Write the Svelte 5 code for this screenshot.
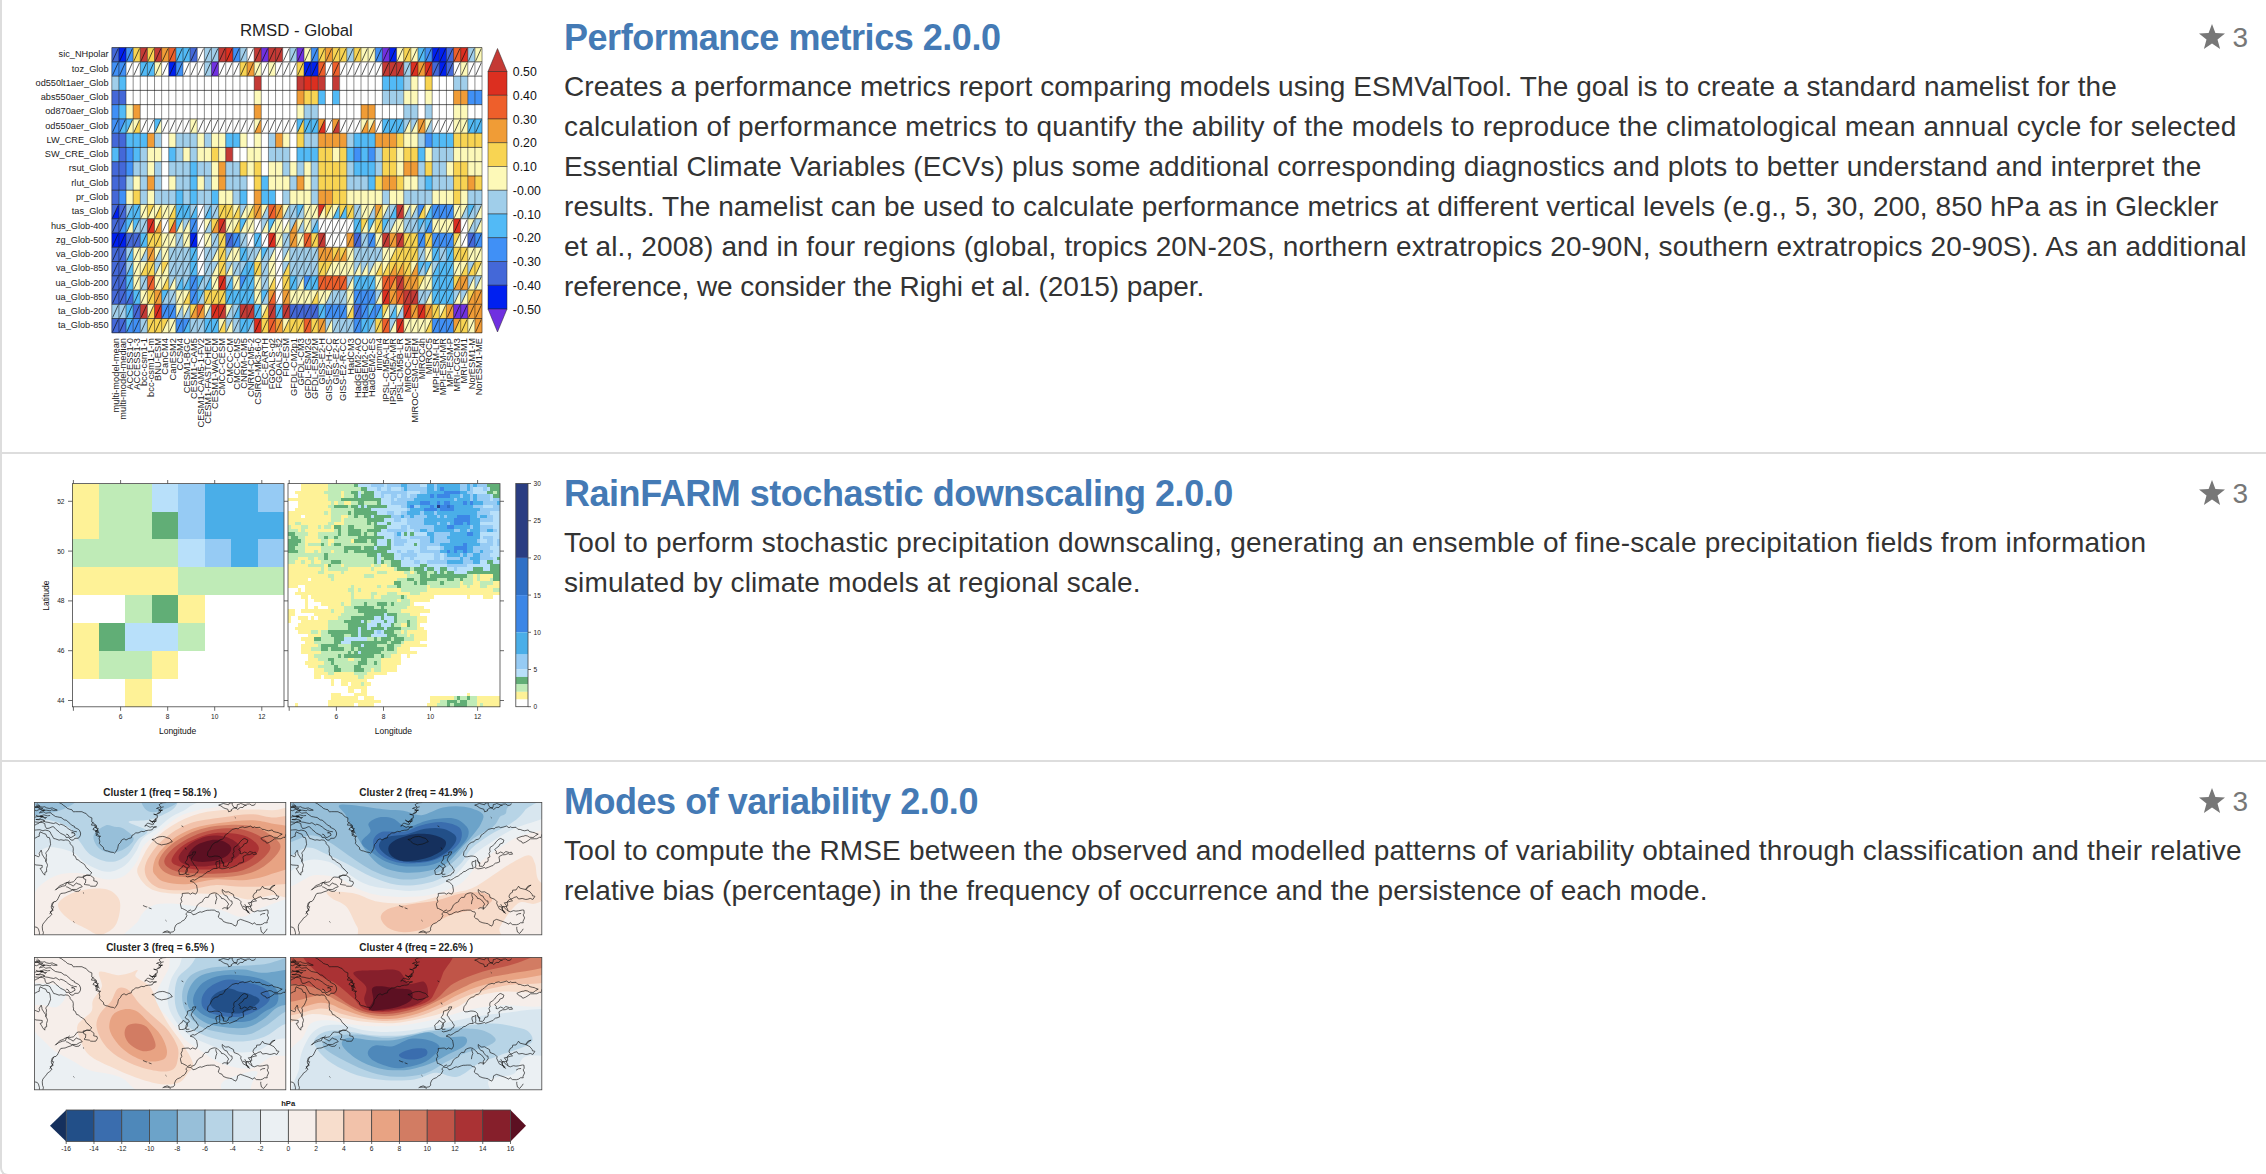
<script>
  // each description line: text and its tracking in px
  const items = [
    {
      kind: 'metrics', title: 'Performance metrics 2.0.0', stars: 3,
      lines: [
        ['Creates a performance metrics report comparing models using ESMValTool. The goal is to create a standard namelist for the', 0.083],
        ['calculation of performance metrics to quantify the ability of the models to reproduce the climatological mean annual cycle for selected', 0.192],
        ['Essential Climate Variables (ECVs) plus some additional corresponding diagnostics and plots to better understand and interpret the', 0.1],
        ['results. The namelist can be used to calculate performance metrics at different vertical levels (e.g., 5, 30, 200, 850 hPa as in Gleckler', 0.053],
        ['et al., 2008) and in four regions (global, tropics 20N-20S, northern extratropics 20-90N, southern extratropics 20-90S). As an additional', 0.126],
        ['reference, we consider the Righi et al. (2015) paper.', -0.08]
      ]
    },
    {
      kind: 'rain', title: 'RainFARM stochastic downscaling 2.0.0', stars: 3,
      lines: [
        ['Tool to perform stochastic precipitation downscaling, generating an ensemble of fine-scale precipitation fields from information', 0.203],
        ['simulated by climate models at regional scale.', 0.12]
      ]
    },
    {
      kind: 'modes', title: 'Modes of variability 2.0.0', stars: 3,
      lines: [
        ['Tool to compute the RMSE between the observed and modelled patterns of variability obtained through classification and their relative', 0.163],
        ['relative bias (percentage) in the frequency of occurrence and the persistence of each mode.', 0.064]
      ]
    }
  ];

  /* ---------- portrait diagram ---------- */
  const heat = {
    V: '#7030e0', B: '#0020f0', R: '#4468d8', D: '#4090f6', S: '#52baf6', L: '#a0ceea', W: '#ffffff',
    Y: '#fdf9b8', G: '#f8d452', O: '#f09c36', T: '#ee5f2b', E: '#dc2f20', C: '#c43a35'
  };
  const w = (n) => 'W'.repeat(n);
  // name, upper-left half, lower-right half (absent when the cell is not split)
  const rows = [
    ['sic_NHpolar', 'RBDGCGCOTSSRWLLCEDLWCVCCWLVYDGOGGLGYYDVBYGYSDBBRTELY', 'RBDGCGCOTSSRWLLCEDLWCVCCWLVYDGOGGLGYYDVBYGYSDBBRTELY'],
    ['toz_Glob', 'DDWWSSYWBDWWWLVWWWGOYWYWWWGBBTWTWWWWWWCCCLEOERBRWYWW', 'DDWWSSYWBDWWWLVWWWGOYWYWWWGBBTWTWWWWWWCCCLEOERBRWYWW'],
    ['od550lt1aer_Glob', 'LS' + w(18) + 'C' + w(5) + 'CEECWC' + w(6) + 'SSSLYWG' + w(3) + 'LLWW'],
    ['abs550aer_Glob', 'RR' + w(18) + 'Y' + w(5) + 'OGGSWS' + w(6) + 'LLLYYWY' + w(3) + 'OODD'],
    ['od870aer_Glob', 'DSYO' + w(16) + 'O' + w(5) + 'YLL' + w(6) + 'OO' + w(4) + 'LLWL' + w(3) + 'YYWW'],
    ['od550aer_Glob', 'DDSYWWSWWWWYWWWWWWWWYWWWWWSSSOWOWWWYYWSSSLLOYWWWYYSS', 'DSYGWWYWWWWYWWWWWWWWOWWWWWGSSEWCWWWOOWSSSYYOLWWWYYSS'],
    ['LW_CRE_Glob', 'RRSSSOLWYLLLYLYYSSYWYWLOYWGLLOOOOLSSSOOOGYYLDSSSGGGG'],
    ['SW_CRE_Glob', 'SRDSLYYWSLYLYYGYCWWYYWLLLWSSSGGYGSDSDLGGYGGSYLLLYYYY'],
    ['rsut_Glob', 'RRDLLYLWLLLSLLYOLLGYGWYYLYLYLGGGGLSSSLGGYOOLGLLYGGYY'],
    ['rlut_Glob', 'RRLYLOLWYLLSYLYOLLLWGSYYYLOYLGGGGLLLSGOOGYYLSLLLGGOG'],
    ['pr_Glob', 'RDYGLYLLLSLSLLSYYLSWOSSWLYYYLOOGGYYYYYLYYLLLLYYYGYLL'],
    ['tas_Glob', 'RRLSYGYYYSSLWLLGGYLYOYTOYLSYYEGYGGLYYOYLCYYDYDDDYYSL', 'BRSSYYGYGSSSWSLGGGYGOLTOLLLYYYYSSGLYLGLSCLLGSDDDYLLY'],
    ['hus_Glob-400', 'RRSSLEYWGSLDWYGEYYSYWLSYWLYYLWWWWWSGSGSLYLLSSYYYEWYL', 'RDYLLEOWTYYDWLOCYGYYWYYYYOLYSWWWWWSYYGLYYLLLDYYYEWLY'],
    ['zg_Glob-500', 'BBRRSGGYYLYBWYLGRDLWSWEYLOYTGCWWWORLDYCOCGGDGDDDGWRD', 'BBRRSGGYYLYBWYLGRDLWSWEYLOYTGCWWWORLDYCOCGGDGDDDYWRD'],
    ['va_Glob-200', 'RRLYYOYYLLLSWLLGLYSLLSLWLLLLLOOGGYLLLLYYGGGLYSLSGGYY', 'RRSYLOLYLLLSWLYGYYSLYLYWYLLLLOOOOYLLLLYGGGGLYSLSGGYY'],
    ['va_Glob-850', 'RRLYYGLGLLLSWLLGLLLSGLYWLLLLLGGYYYLLLYYGGGYSSLSSYYLG', 'RRSYGGYYLLLSWLYGYLSSGLYWGLLLLGYYYYYYYGGOOGOLYSSSYGGY'],
    ['ua_Glob-200', 'RRSYLTYYLLLDSLYELYDSYLYWGSLDSTTTTLSSSYTTCOOGYSSSGOLL', 'RRSYLTYGYSSDLSYESYSSYLGWGSYSSTTTTYSSSYTOCOOYYSSSOOYY'],
    ['ua_Glob-850', 'RRDSYGOSLYYDSGGGSSSSYSOWOYYYYYYLLYDDDLEOTCCLLSSSLLGO', 'RRRSYGOLLYGDLGGGSSSSYLTWOYYYGYLLLYDDDYEOTCCLYSSSYYOO'],
    ['ta_Glob-200', 'LLSRCYEDDYYGTYEEYLCCSYCSCRRRRSDDDYRDSDGLYEOEOGYOVVOO', 'LLSRCGEDDLLOOLECLSCCSGCSCRRRRSDDDGRDDSYSLEOEOGGOVVOO'],
    ['ta_Glob-850', 'RRSDLGGGYDDLLSSYLLSSEGTOYGGTGOLLLLDSSGTLEYYYYDDDOGYO', 'RRDDLGGYYDSLLSSGYLSLEGTOGGGTGOYLLLDSLGTYEYYYGDDDGGYO']
  ];
  const models = ('multi-model-mean multi-model-median ACCESS1-0 ACCESS1-3 bcc-csm1-1 bcc-csm1-1-m BNU-ESM CanCM4 CanESM2 CCSM4 ' +
    'CESM1-BGC CESM1-CAM5 CESM1-CAM5-1-FV2 CESM1-FASTCHEM CESM1-WACCM CMCC-CESM CMCC-CM CMCC-CMS CNRM-CM5 CNRM-CM5-2 ' +
    'CSIRO-Mk3-6-0 EC-EARTH FGOALS-g2 FGOALS-s2 FIO-ESM GFDL-CM2p1 GFDL-CM3 GFDL-ESM2G GFDL-ESM2M GISS-E2-H GISS-E2-H-CC ' +
    'GISS-E2-R GISS-E2-R-CC HadCM3 HadGEM2-AO HadGEM2-CC HadGEM2-ES inmcm4 IPSL-CM5A-LR IPSL-CM5A-MR IPSL-CM5B-LR MIROC-ESM ' +
    'MIROC-ESM-CHEM MIROC4h MIROC5 MPI-ESM-LR MPI-ESM-MR MPI-ESM-P MRI-CGCM3 MRI-ESM1 NorESM1-M NorESM1-ME').split(' ');
  const HX = 111.8, HY = 47.6, CW = 7.12, CH = 14.26;
  const barCodes = ['E', 'T', 'O', 'G', 'Y', 'L', 'S', 'D', 'R', 'B'];
  const barLabels = ['0.50', '0.40', '0.30', '0.20', '0.10', '-0.00', '-0.10', '-0.20', '-0.30', '-0.40', '-0.50'];

  /* ---------- precipitation maps ---------- */
  const rainCol = ['#ffffff', '#fef297', '#bfebb7', '#61ae76', '#b8e0fa', '#96cbf4', '#4aaee8', '#3c86e6', '#3070c6', '#2a3d82'];
  const coarse = ['12245665', '12235666', '22224565', '11112222', '00231000', '13442000', '12210000', '00100000'];
  const field = [
    [.5, 1, 1, 1.7, 2.3, 3, 4, 4.5, 5, 5, 5.5, 6.3, 6, 6, 4, 2.6],
    [.2, 1, 1, 1.8, 2, 3, 3, 3.8, 5, 5.5, 5.8, 6.6, 6.3, 6.3, 5.5, 4.8],
    [.9, .8, 1.1, 2, 2, 2.5, 3, 4, 5, 5.5, 6.2, 6.1, 6, 6.4, 5.4, 4.4],
    [2.6, 1.2, 1.7, 2.4, 2.1, 1.8, 2.5, 4, 4.6, 4.1, 5, 5.6, 6.1, 6.6, 5.1, 4.4],
    [2.6, 1.2, 1.7, 2.4, 2.3, 2.2, 3.5, 3.5, 4.2, 3.8, 4.8, 5.7, 6.2, 6.5, 5.6, 4.6],
    [2, 1.5, 1.9, 2.6, 2.6, 2.2, 2.5, 2.5, 4.4, 4.4, 4.6, 5, 5.9, 5.5, 4.8, 3.5],
    [1, 1, 1.2, 1.3, 1.3, 1.2, 1.2, 1.2, 1.6, 1.9, 2.6, 2.9, 3, 2.6, 2.2, 2.3],
    [.6, .8, 1, 1, 1.1, 1.1, 1.2, 1.2, 2.2, 2, 1.3, 1.3, 1.2, 1.2, 1.8, 1.9],
    [0, .5, .6, .9, 1.3, 2.3, 2.1, 2.6, 1.5, .9, .4, -.2, -.2, -.2, -.2, -.2],
    [.3, .5, .7, 1.2, 1.8, 3.4, 3.8, 3.3, 2.4, 1.2, .2, -1, -1, -1, -1, -1],
    [.3, .9, 1.7, 2.8, 2.8, 3.5, 3.5, 3.6, 2.3, 1.6, .5, -1, -1, -1, -1, -1],
    [.1, .9, 2.5, 2.9, 2.9, 4, 3.1, 2.6, 1.5, 1.1, .4, -1, -1, -1, -1, -1],
    [-.6, .6, 2.1, 2.4, 2.2, 2.3, 1.9, 1.3, .9, .1, -1, -1, -1, -1, -1, -1],
    [-1, .1, 1.2, 1.8, 1.9, 2.5, 1.3, .9, -.2, -1, -1, -1, -1, -1, -1, -1],
    [-1, -1, -.8, .2, .1, 1, 0, -.8, -1, -1, -1, -2.5, -4, -4, -2.5, -2],
    [.5, -.6, -.1, .9, .9, .8, .5, 0, -1, -1, .1, 1.6, 2.4, 2.8, 1.6, 1]
  ];
  const rnd = (x, y) => { const v = Math.sin(x * 127.1 + y * 311.7 + 4.3) * 43758.5453; return v - Math.floor(v); };
  const at = (x, y) => field[Math.max(0, Math.min(15, y))][Math.max(0, Math.min(15, x))];
  const fine = [];
  for (let y = 0; y < 64; y++) {
    let start = 0, prev = -1;
    for (let x = 0; x <= 64; x++) {
      let c = -1;
      if (x < 64) {
        const fx = (x + .5) / 4 - .5, fy = (y + .5) / 4 - .5;
        const ix = Math.floor(fx), iy = Math.floor(fy), tx = fx - ix, ty = fy - iy;
        let v = (at(ix, iy) * (1 - tx) + at(ix + 1, iy) * tx) * (1 - ty) + (at(ix, iy + 1) * (1 - tx) + at(ix + 1, iy + 1) * tx) * ty;
        const n = (rnd(x, y) - .5) * .45 + (rnd(x >> 1, (y >> 1) + 90) - .5) * .9 + (rnd((x + (y & 3)) >> 2, y + 40) - .5) * .95;
        v += n * (v > 1.6 ? 1.25 : .62);
        c = Math.max(0, Math.min(8, Math.round(v)));
        if (x === 45 && y === 6) c = 9;
      }
      if (c !== prev) {
        if (prev > 0) fine.push({ x: start, y, n: x - start, c: prev });
        start = x; prev = c;
      }
    }
  }
  const rainBar = [[30, 20, 9], [20, 15, 8], [15, 10, 7], [10, 7, 6], [7, 5, 5], [5, 4, 4], [4, 3, 3], [3, 2, 2], [2, 1, 1]];
  const ry = (v) => 706.7 - v * 7.44;

  /* ---------- circulation regimes ---------- */
  const pal = ['#15305d', '#224f88', '#3a6dae', '#4e88ba', '#6ca3c9', '#97bfd9', '#b7d4e6', '#d8e6ef', '#ebf0f3',
    '#f6eeea', '#f7ddcc', '#f2c2aa', '#e8a383', '#d27c63', '#c05548', '#aa3234', '#861f2b', '#5c1022'];
  const pts = (s) => s.trim().split(/\s+/).map((p) => p.split(',').map(Number));
  function blob(s) {
    const p = pts(s), n = p.length;
    let d = `M${p[0]}`;
    for (let i = 0; i < n; i++) {
      const a = p[(i + n - 1) % n], b = p[i], c = p[(i + 1) % n], e = p[(i + 2) % n];
      d += `C${b[0] + (c[0] - a[0]) / 6},${b[1] + (c[1] - a[1]) / 6} ${c[0] - (e[0] - b[0]) / 6},${c[1] - (e[1] - b[1]) / 6} ${c}`;
    }
    return d + 'Z';
  }
  function rough(s) {
    const p = pts(s);
    let d = `M${p[0]}`;
    for (let i = 1; i < p.length; i++) {
      const [x0, y0] = p[i - 1], [x1, y1] = p[i], len = Math.hypot(x1 - x0, y1 - y0), k = Math.max(1, Math.round(len / 7));
      for (let j = 1; j < k; j++) {
        const t = j / k;
        d += `L${x0 + (x1 - x0) * t + (rnd(x0 + j, y1) - .5) * 7},${y0 + (y1 - y0) * t + (rnd(y0 + j, x1) - .5) * 7}`;
      }
      d += `L${x1},${y1}`;
    }
    return d;
  }
  const coast = [
    '165,127 205,155 235,158 250,170 262,190 275,205 268,220 280,230 278,250 290,268 320,279 330,260 340,240 360,235 380,218 420,210 438,200 405,198 412,190 430,192 418,180 434,184 440,165 430,162 448,158 455,150 438,145 450,140 445,134 465,127',
    '262,185 256,195 270,200 260,208 275,212 268,225 282,228', '264,196 274,208 266,214 278,220', '430,190 438,182 426,186 440,176', '440,162 452,150 444,152 458,140',
    '425,238 445,230 475,235 482,245 465,252 440,250 430,240 425,238',
    '96,140 125,150 110,158 135,158 160,170 185,180 200,195 222,210 225,225 205,240 185,232 165,215 150,200 130,205 125,190 96,185',
    '96,150 118,146 140,152 160,150 130,143 100,133', '100,165 120,170 100,178 125,182 108,190 96,196', '185,222 195,232 210,225 200,218 215,215',
    '104,130 112,138 98,142 120,145', '96,172 130,172 112,168 140,166', '120,182 150,190 170,192 190,205 205,212',
    '96,210 120,212 140,215 150,235 165,240 190,240 205,265 205,285 225,305 240,320 257,338 250,345 215,352 205,365 180,370 155,390 175,378 195,362',
    '232,348 245,345 258,350 262,362 271,364 268,378 250,375 235,372 240,358 232,348',
    '190,370 205,378 215,368 230,380 210,388 200,388 185,380',
    '225,388 190,395 170,400 160,420 145,430 150,440 140,455 145,462 138,470 125,485 118,500 120,524', '96,500 104,502 110,524',
    '150,425 143,440 149,450 139,462', '96,285 108,290 115,270 122,290 132,312 130,325 125,345 118,335 112,325 118,316 96,312', '96,235 110,228 112,215 128,222 140,240 138,262 128,280 128,305',
    '612,135 625,130 640,134 650,128 655,142 670,132 690,135 680,142 665,148 655,143 640,155 630,145 612,135', '690,132 705,136 715,130',
    '800,222 798,232 775,236 745,248 730,235 750,228 775,232 790,222 765,214 740,208 712,200 680,200 650,208 630,225 610,245 590,262 582,275 585,290 608,288 620,295 625,318 638,315 650,300 655,290 652,280 655,262 672,245 685,235 694,240 680,258 668,268 672,280 715,276 718,282 690,284 680,290 682,305 660,317 630,325 612,322 615,300 605,305 608,325 580,335 560,350 545,360 532,363 550,375 552,395 548,402 510,400 505,430 508,445 525,454 545,450 552,435 575,412 600,398 612,405 640,432 636,448 650,430 625,400 622,388 640,395 655,412 675,425 680,445 695,458 690,440 702,438 695,428 718,422 708,408 735,378 755,388 770,375 755,388 780,408 775,418 745,415 722,412 705,422 700,440 712,455 735,452 750,450 748,488 735,492 700,488 680,480 665,482 660,498 635,488 615,475 612,455 600,450 560,455 540,464 525,456 515,480 492,495 485,515 458,516',
    '520,348 545,345 555,330 542,312 535,300 548,275 525,288 518,306 530,320 520,338 530,342', '500,330 512,316 524,325 520,340 502,343 500,330',
    '604,402 607,415 603,432', '622,446 638,444', '685,432 705,452', '680,438 700,460', '728,465 742,460', '730,500 738,520 748,506', '618,300 625,312',
    '400,436 412,440', '416,443 424,446', '518,262 521,268', '508,197 513,200', '463,480 466,483', '455,518 470,516 478,520', '657,171 660,174', '232,397 235,400', '205,484 208,487'
  ].map(rough);
  const clusters = [
    { name: 'Cluster 1 (freq = 58.1% )', x: 96, y: 127, px: 34.4, py: 802.5, bg: 9, shapes: [
      [8, '60,430 110,378 160,345 230,340 300,358 350,345 385,300 400,260 440,220 500,170 560,148 620,135 660,90 60,60'],
      [7, '60,300 130,262 200,275 240,310 300,335 350,315 380,275 400,235 440,205 480,170 530,140 560,90 60,60'],
      [6, '60,170 140,180 190,200 220,240 255,285 310,305 355,285 385,240 412,212 360,185 420,178 480,150 500,120 510,80 60,60'],
      [5, '60,60 70,165 110,162 165,152 215,120 220,60'], [5, '295,196 262,225 275,262 310,278 350,265 374,235 345,205 320,200'], [5, '400,100 405,145 440,155 500,125 500,100'],
      [8, '370,560 388,480 420,440 470,430 560,440 620,450 680,470 740,440 840,420 850,560'],
      [10, '162,435 190,405 240,388 300,388 332,415 335,455 320,500 280,524 240,505 190,475'],
      [10, '385,340 395,300 430,240 500,185 580,155 680,148 760,150 850,160 850,395 760,405 700,418 640,405 560,400 480,400 420,385'],
      [11, '405,325 420,285 460,235 530,190 620,172 700,162 760,172 850,180 850,345 760,375 680,380 600,375 520,390 450,385 415,360'],
      [12, '428,325 440,285 480,240 540,205 620,188 700,180 760,190 850,215 850,300 750,345 680,360 600,358 520,372 460,365 435,345'],
      [13, '445,300 470,262 520,225 580,202 660,194 720,203 770,235 785,262 760,300 710,335 640,350 540,352 480,345 450,325'],
      [14, '460,300 490,260 540,228 600,208 670,206 730,230 757,262 730,300 680,330 610,340 520,338 475,325'],
      [15, '480,300 505,262 550,235 610,218 680,225 718,250 722,275 690,305 640,322 560,328 500,318'],
      [16, '500,290 530,252 580,228 630,230 667,252 672,280 640,305 580,318 520,314'],
      [17, '528,280 550,255 590,240 625,243 647,262 637,285 600,302 555,305 532,296']] },
    { name: 'Cluster 2 (freq = 41.9% )', x: 813, y: 127, px: 290.4, py: 802.5, bg: 9, shapes: [
      [8, '780,365 880,345 950,355 1000,385 1060,405 1150,410 1220,400 1290,370 1340,310 1390,270 1440,235 1480,220 1560,185 1560,60 780,60'],
      [7, '780,330 860,300 920,305 960,330 1020,370 1080,385 1160,392 1230,375 1280,340 1320,290 1370,250 1440,205 1550,155 1550,60 780,60'],
      [6, '780,285 860,262 910,280 970,310 1040,350 1110,374 1180,372 1240,352 1290,310 1320,265 1370,225 1430,190 1470,150 1520,60 780,60'],
      [5, '780,240 870,225 920,245 975,285 1050,335 1120,357 1190,352 1240,328 1285,290 1320,240 1380,200 1400,170 1418,150 1400,60 780,60'],
      [4, '950,135 968,165 1000,230 1030,280 1070,320 1130,337 1200,332 1250,310 1290,265 1320,230 1347,190 1350,160 1300,140 1240,142 1180,165 1130,152 1080,148 1010,138'],
      [3, '1037,215 1032,190 1060,172 1100,175 1140,200 1200,180 1270,175 1307,200 1310,230 1285,265 1250,295 1200,316 1130,318 1080,304 1045,280 1012,248'],
      [2, '1045,240 1070,215 1130,215 1180,195 1240,186 1287,203 1290,240 1260,275 1210,302 1140,310 1085,297 1053,270'],
      [1, '1062,250 1085,230 1140,222 1190,206 1240,206 1277,230 1262,265 1215,297 1150,306 1100,296 1068,272'],
      [0, '1088,260 1110,238 1160,222 1210,224 1247,242 1238,270 1190,295 1130,303 1095,286'],
      [10, '915,395 950,395 1000,402 1060,425 1150,428 1250,402 1320,385 1380,345 1430,310 1480,285 1498,310 1508,360 1550,395 1500,430 1450,430 1400,500 1380,560 1040,560 1000,500 970,440 930,415'],
      [11, '1066,470 1090,445 1150,432 1220,422 1290,400 1350,398 1378,420 1340,445 1260,465 1190,505 1130,516 1085,502']] },
    { name: 'Cluster 3 (freq = 6.5% )', x: 96, y: 52, px: 34.4, py: 957.5, bg: 9, shapes: [
      [8, '520,0 470,90 440,150 425,185 460,220 490,260 520,300 560,330 620,370 700,385 760,350 850,310 850,0'],
      [7, '560,0 500,80 475,130 470,190 490,240 530,285 590,315 650,335 720,332 770,300 850,260 850,0'],
      [6, '610,0 530,80 495,120 490,190 510,240 550,275 610,298 680,304 740,290 790,255 850,220 850,0'],
      [5, '640,78 580,85 530,110 510,160 520,215 560,258 620,277 690,284 740,260 790,220 850,180 850,50 740,72'],
      [4, '600,95 550,115 525,160 530,205 570,245 620,260 690,262 740,235 780,200 850,175 850,90 740,98 680,88'],
      [3, '620,106 570,126 543,165 545,200 580,230 640,244 700,242 740,215 775,190 775,150 740,120 680,106'],
      [2, '640,118 590,138 566,170 570,205 610,225 670,230 720,210 754,180 747,150 705,130'],
      [1, '640,145 600,163 588,190 610,212 670,220 705,203 727,180 700,162 670,155'],
      [8, '60,250 110,290 150,330 200,360 250,390 320,405 360,430 380,490 60,490'],
      [8, '60,135 120,130 170,140 185,165 160,200 120,195 60,190'], [8, '640,480 620,430 680,400 720,395 705,430 690,480'],
      [10, '278,95 330,105 365,98 385,90 380,110 420,140 440,190 470,250 510,310 540,370 525,400 500,428 450,432 380,412 310,380 250,345 225,300 217,255 255,215 260,180 285,140'],
      [11, '330,145 360,150 390,190 430,230 470,270 497,320 497,360 485,387 450,394 390,380 330,350 290,310 270,260 280,220 310,185'],
      [12, '345,208 380,212 415,245 450,285 467,330 457,358 410,363 360,340 325,305 306,265 315,225'],
      [13, '380,250 410,260 432,300 432,325 400,333 365,314 349,285 355,258']] },
    { name: 'Cluster 4 (freq = 22.6% )', x: 813, y: 52, px: 290.4, py: 957.5, bg: 8, shapes: [
      [7, '860,490 838,380 860,300 900,260 960,255 1020,270 1100,275 1200,262 1280,240 1400,220 1560,215 1560,335 1470,350 1440,400 1370,420 1330,490'],
      [6, '880,300 910,275 960,272 1040,285 1130,285 1200,270 1290,258 1380,250 1440,260 1480,275 1485,310 1400,345 1340,370 1280,410 1220,398 1160,418 1080,420 1000,405 930,370 890,330'],
      [5, '905,320 930,290 1000,283 1080,293 1160,282 1220,272 1280,265 1350,270 1387,295 1370,315 1300,340 1250,365 1190,400 1110,410 1040,397 970,365'],
      [4, '958,315 975,293 1040,300 1100,300 1150,288 1200,276 1240,292 1300,290 1302,315 1250,345 1200,372 1130,390 1060,384 1000,357'],
      [3, '1030,335 1050,316 1100,318 1150,296 1200,300 1230,318 1215,345 1180,370 1120,384 1080,377 1040,357'],
      [2, '1118,342 1150,327 1190,326 1194,345 1160,358 1128,354'],
      [9, '770,320 840,300 870,250 920,240 980,252 1050,258 1130,255 1200,242 1270,222 1330,205 1400,195 1560,180 1560,-20 770,-20'],
      [10, '770,240 870,222 950,232 1020,245 1100,249 1180,235 1250,215 1290,195 1330,170 1400,155 1560,140 1560,-20 770,-20'],
      [11, '770,212 900,205 960,222 1030,238 1100,242 1170,229 1230,205 1280,180 1340,155 1420,135 1560,112 1560,-20 770,-20'],
      [12, '770,200 900,188 960,208 1030,231 1100,236 1170,220 1230,194 1290,160 1370,130 1560,88 1560,-20 770,-20'],
      [13, '770,175 900,165 950,185 1010,217 1080,228 1160,213 1220,185 1290,145 1370,112 1560,68 1560,-20 770,-20'],
      [14, '770,110 870,140 930,160 980,195 1030,217 1100,220 1170,202 1220,178 1270,130 1350,95 1450,68 1540,20 1500,-20 770,-20'],
      [15, '850,20 890,100 940,130 990,175 1020,207 1080,215 1150,202 1200,182 1220,150 1240,100 1260,20 1050,-20'],
      [16, '990,97 1060,90 1115,92 1145,130 1187,125 1197,165 1160,195 1090,210 1040,210 1020,180 1025,140'],
      [17, '1042,145 1065,138 1110,145 1150,150 1152,178 1120,198 1070,209 1033,209 1045,180']] }
  ];
  const modeTicks = Array.from({ length: 17 }, (_, i) => ({ v: -16 + 2 * i, x: 66.2 + i * 27.77 }));
</script>

<main>
  {#each items as item}
    <article class="row {item.kind}">
      <div class="thumb">
        {#if item.kind === 'metrics'}
          <svg class="figure" viewBox="2 0 560 452" width="560" height="452">
            <text class="ink" x="296.4" y="35.6" font-size="16.8" text-anchor="middle">RMSD - Global</text>
            {#each rows as [name, upper, lower], r}
              <text class="ink" x="108.6" y={HY + r * CH + 9.8} font-size="9.2" text-anchor="end">{name}</text>
              {#each upper as code, c}
                <rect x={HX + c * CW} y={HY + r * CH} width={CW} height={CH} fill={heat[code]} />
                {#if lower}
                  <path d="M{HX + c * CW + CW} {HY + r * CH}v{CH}h{-CW}z" fill={heat[lower[c]]} />
                  <path class="slash" d="M{HX + c * CW + CW - .8} {HY + r * CH + 1}l{-CW + 1.6} {CH - 2}" />
                {/if}
              {/each}
            {/each}
            {#each Array(53) as _, c}
              <path class="rule v" d="M{HX + c * CW} {HY}v{CH * 20}" />
            {/each}
            {#each Array(21) as _, r}
              <path class="rule" d="M{HX} {HY + r * CH}h{CW * 52}" />
            {/each}
            {#each models as model, c}
              <text class="ink" font-size="9.3" text-anchor="end" transform="translate({HX + c * CW + 6.8} 338) rotate(-90)">{model}</text>
            {/each}
            <path class="outline" d="M488 71.5L497.5 48.5L507 71.5z" fill={heat.C} />
            {#each barCodes as code, i}
              <rect class="outline" x="488" y={71.5 + i * 23.75} width="19" height="23.75" fill={heat[code]} />
            {/each}
            <path class="outline" d="M488 309L497.5 332L507 309z" fill={heat.V} />
            {#each barLabels as label, i}
              <text class="ink dark" x="512.8" y={76 + i * 23.75} font-size="12.3">{label}</text>
            {/each}
          </svg>
        {:else if item.kind === 'rain'}
          <svg class="figure" viewBox="2 454 560 306" width="560" height="306">
            {#each coarse as line, r}
              {#each line as code, c}
                <rect x={72.4 + c * 26.45} y={483.6 + r * 27.9} width="26.6" height="28" fill={rainCol[+code]} shape-rendering="crispEdges" />
              {/each}
            {/each}
            {#each fine as f}
              <rect x={288 + f.x * 3.31} y={483.6 + f.y * 3.487} width={f.n * 3.31} height="3.487" fill={rainCol[f.c]} shape-rendering="crispEdges" />
            {/each}
            <rect class="frame" x="72.4" y="483.6" width="211.6" height="223.2" />
            <rect class="frame" x="288" y="483.6" width="212" height="223.2" />
            {#each [0, 1] as p}
              {#each [73.4, 120.6, 167.7, 214.7, 261.8] as x, i}
                <path class="frame" d="M{x + p * 215.8} 480v3.6M{x + p * 215.8} 706.8v4" />
                {#if i}
                  <text class="ink" x={x + p * 215.8} y="719.4" font-size="6.6" text-anchor="middle">{4 + 2 * i}</text>
                {/if}
              {/each}
              <text class="ink dark" x={177.6 + p * 215.8} y="733.6" font-size="8.5" text-anchor="middle">Longitude</text>
            {/each}
            {#each [52, 50, 48, 46, 44] as lat, i}
              <path class="frame" d="M68 {501.3 + i * 49.8}h4.4M284 {501.3 + i * 49.8}h4M500 {501.3 + i * 49.8}h4" />
              <text class="ink" x="64.5" y={503.7 + i * 49.8} font-size="6.6" text-anchor="end">{lat}</text>
            {/each}
            <text class="ink dark" font-size="8.5" text-anchor="middle" transform="translate(49 595.7) rotate(-90)">Latitude</text>
            {#each rainBar as [hi, lo, c]}
              <rect x="515.8" y={ry(hi)} width="12.2" height={(hi - lo) * 7.44} fill={rainCol[c]} />
            {/each}
            <rect class="frame" x="515.8" y="483.5" width="12.2" height="223.2" />
            {#each [0, 5, 10, 15, 20, 25, 30] as v}
              <path class="frame" d="M528 {ry(v)}h3" />
              <text class="ink" x="533.6" y={ry(v) + 2.5} font-size="6.6">{v}</text>
            {/each}
          </svg>
        {:else}
          <svg class="figure" viewBox="2 762 560 412" width="560" height="412">
            {#each clusters as c}
              <text class="ink bold" x={c.px + 125.8} y={c.py - 6.4} font-size="10" text-anchor="middle">{c.name}</text>
              <svg x={c.px} y={c.py} width="251.4" height="132.3" viewBox="{c.x} {c.y} 704 397" preserveAspectRatio="none">
                <rect x={c.x} y={c.y} width="704" height="397" fill={pal[c.bg]} />
                {#each c.shapes as [color, shape]}
                  <path d={blob(shape)} fill={pal[color]} />
                {/each}
                <g transform="translate({c.x - 96} {c.y - 127})">
                  {#each coast as d}
                    <path class="coast" {d} />
                  {/each}
                </g>
              </svg>
              <rect class="frame" x={c.px} y={c.py} width="251.4" height="132.3" />
            {/each}
            <text class="ink bold" x="288.2" y="1106.4" font-size="7.6" text-anchor="middle">hPa</text>
            <path d="M66.2 1110L50 1125.7L66.2 1141.4z" fill={pal[0]} />
            <path d="M510.5 1110L526 1125.7L510.5 1141.4z" fill={pal[17]} />
            {#each modeTicks as t, i}
              {#if i < 16}
                <rect class="frame" x={t.x} y="1110" width="27.77" height="31.4" style:fill={pal[i + 1]} />
              {/if}
              <path class="frame" d="M{t.x} 1141v3" />
              <text class="ink" x={t.x} y="1150.6" font-size="6.7" text-anchor="middle">{t.v}</text>
            {/each}
          </svg>
        {/if}
      </div>
      <div class="body">
        <header>
          <h2>{item.title}</h2>
          <span class="stars">
            <svg viewBox="0 0 26 25" width="26" height="25"><path d="M13 0L16.4 9.1L26 9.5L18.5 15.4L21.1 25L13 19.6L4.9 25L7.5 15.4L0 9.5L9.6 9.1z" fill="#777" /></svg>
            {item.stars}
          </span>
        </header>
        <p>
          {#each item.lines as [line, tracking]}
            <span style:letter-spacing="{tracking}px">{line}</span>
          {/each}
        </p>
      </div>
    </article>
  {/each}
</main>

<style>
  :global(body) { margin: 0; background: #fff; overflow: hidden; }
  main {
    box-sizing: border-box;
    height: 1176px;
    border: solid #ddd;
    border-width: 0 0 2px 2px;
    border-bottom-left-radius: 8px;
    font-family: "Liberation Sans", Arial, sans-serif;
    color: #333;
  }
  .row { box-sizing: border-box; display: flex; border-bottom: 2px solid #ddd; height: 308px; }
  .row.metrics { height: 454px; }
  .row.modes { height: 412px; border-bottom: 0; }
  .thumb { flex: 0 0 562px; }
  .figure { display: block; }
  .body { flex: 1; min-width: 0; padding: 20px 18px 0 0; }
  .metrics .body { padding-top: 18px; }
  header { display: flex; justify-content: space-between; height: 49px; }
  h2 { margin: 0; font-size: 36px; line-height: 40px; font-weight: 700; letter-spacing: -0.47px; color: #447ab5; white-space: nowrap; }
  .stars { display: flex; align-items: center; gap: 7px; height: 40px; font-size: 28px; line-height: 40px; color: #777; }
  .stars svg { margin-bottom: 3px; }
  p { margin: 0; font-size: 28px; line-height: 40px; }
  p span { display: block; white-space: nowrap; }
  .ink { fill: #222; }
  .dark { fill: #111; }
  .bold { font-weight: 700; }
  .rule { stroke: #111; stroke-width: .9; fill: none; opacity: .75; }
  .rule.v { stroke-width: .8; opacity: .6; }
  .slash { stroke: #111; stroke-width: .7; fill: none; }
  .outline { stroke: #222; stroke-opacity: .6; stroke-width: .8; }
  .frame { fill: none; stroke: #444; stroke-width: .8; }
  .coast { fill: none; stroke: #111; stroke-opacity: .85; stroke-width: 2.2; }
</style>
